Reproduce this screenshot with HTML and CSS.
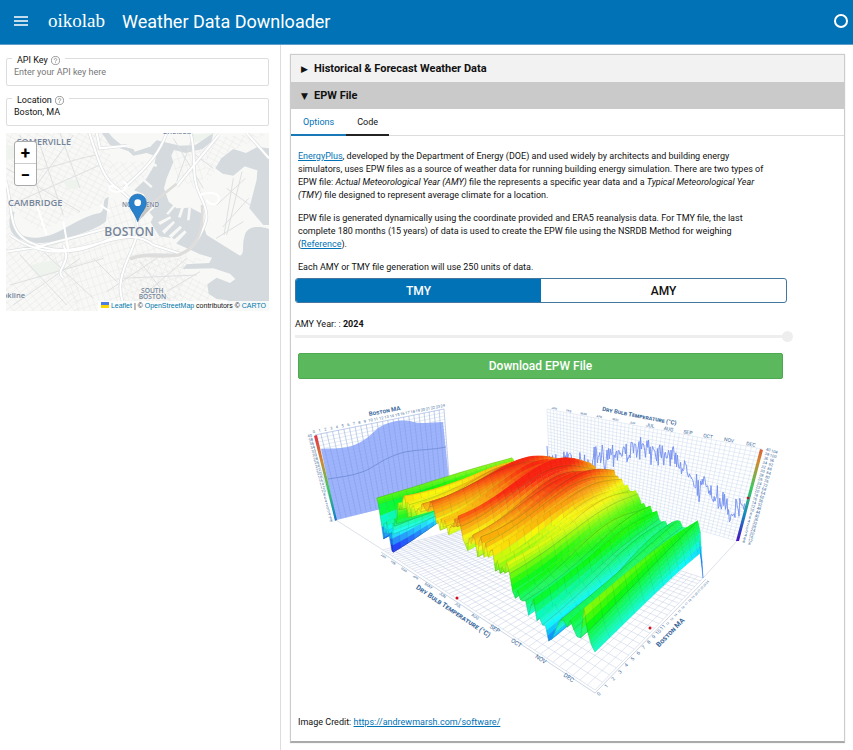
FILE: index.html
```html
<!DOCTYPE html>
<html lang="en">
<head>
<meta charset="utf-8">
<meta name="viewport" content="width=device-width, initial-scale=1">
<title>Weather Data Downloader</title>
<link rel="stylesheet" href="styles.css">
</head>
<body>
<header class="topbar">
  <button class="menu-btn" type="button" aria-label="Menu"><svg viewBox="0 0 14 10" width="14" height="10"><path d="M0 1h14M0 5h14M0 9h14"/></svg></button>
  <a class="brand" href="#">oikolab</a>
  <h1 class="title">Weather Data Downloader</h1>
  <svg class="busy" viewBox="0 0 16 16" width="16" height="16"><circle cx="8" cy="8" r="6"/></svg>
</header>
<div class="layout">
  <aside class="sidebar">
    <div class="field">
      <label class="field-label" for="key">API Key <svg class="help" viewBox="0 0 10 10" width="9" height="9"><circle cx="5" cy="5" r="4.5"/><path d="M3.6 4.1c0-2 2.9-1.8 2.8 0C6.4 5 5 5 5 6.2M5 7v.9"/></svg></label>
      <input class="field-input" id="key" type="text" placeholder="Enter your API key here">
    </div>
    <div class="field">
      <label class="field-label" for="loc">Location <svg class="help" viewBox="0 0 10 10" width="9" height="9"><circle cx="5" cy="5" r="4.5"/><path d="M3.6 4.1c0-2 2.9-1.8 2.8 0C6.4 5 5 5 5 6.2M5 7v.9"/></svg></label>
      <input class="field-input" id="loc" type="text" value="Boston, MA">
    </div>
    <div class="map">
      <svg class="map-canvas" viewBox="18 24 789 534" preserveAspectRatio="xMidYMid slice">
        <defs>
          <pattern id="g1" width="22" height="15" patternUnits="userSpaceOnUse" patternTransform="rotate(28)"><path class="st" d="M0 0H22M0 0V15"/></pattern>
          <pattern id="g2" width="17" height="26" patternUnits="userSpaceOnUse" patternTransform="rotate(-18)"><path class="st" d="M0 0H17M0 0V26"/></pattern>
          <pattern id="g3" width="24" height="16" patternUnits="userSpaceOnUse" patternTransform="rotate(-38)"><path class="st" d="M0 0H24M0 0V16"/></pattern>
        </defs>
        <rect class="land" x="0" y="0" width="850" height="600"/>
        <path fill="url(#g1)" d="M18 24H320L345 190 300 240 200 280 120 320 50 260 18 200Z"/>
        <path fill="url(#g3)" d="M18 200L50 330 110 365 230 345 240 558H18ZM330 110L460 110 420 180 350 190Z"/>
        <path fill="url(#g2)" d="M110 365L320 290 330 220 440 240 450 300 560 390 540 558H230ZM520 60L630 70 600 200 520 150Z"/>
        <path fill="url(#g1)" d="M350 400L620 400 540 440 640 490 620 558H350ZM620 40L807 24 690 80 620 170Z"/>
        <path class="park" d="M190 170l40-8 16 24-42 8zM90 420l70-14 26 30-70 22zM20 60l28 4 4 34-34 6zM570 30l60-6 8 16-60 14z"/>
        <g class="water">
          <path d="M326 216C300 222 322 252 300 264C270 268 228 290 180 318C132 342 90 344 60 328C38 310 38 284 44 262L34 258C20 300 32 336 70 346C110 362 160 352 214 336C260 320 302 306 318 288Z"/>
          <path d="M306 24L330 60 385 78 400 92 440 84 468 94 462 122 440 160 402 196 432 208 438 232 470 232 462 250 448 262 460 276 452 292 478 334 520 340 530 356 566 372 600 388 636 398 628 414 560 418 548 432 640 430 690 446 706 462 690 474 650 458 622 478 626 506 650 522 684 526 672 558H807V312C770 300 740 306 734 332C724 360 736 386 720 392L620 330 612 308 606 266 572 248 530 250 506 230 492 190 500 160 520 112 514 92 522 74 556 84 608 72 634 50 640 24 610 44 586 60 540 62 470 46 452 64 410 74 372 66 340 40 326 24Z"/>
          <path d="M807 70L772 66 738 84 700 72 664 100 646 130 668 146 700 152 734 124 772 136 770 164 748 250 790 300 807 300Z"/>
        </g>
        <path class="land" d="M398 200l22 28-8 8-22-28zM420 150l38 34-5 5-38-34zM452 108l20 12-4 6-22-10zM474 292l36-18 4 6-34 20zM486 318l34-30 5 5-32 34zM506 332l34-30 6 6-32 32zM520 346l34-30 6 6-32 34zM520 240l-22 26 7 3 24-28zM544 246l-10 30 8 2 10-30zM565 248l-4 38 8 0 4-36zM400 70l52-14 2 8-50 16z"/>
        <g class="minor"><path d="M60 130C120 150 180 110 290 90M20 130L240 260M120 60L190 270M180 24L240 190M30 240L300 120M220 30L110 180M60 30L130 240M560 70L640 130M520 40L610 190M580 30L530 170M680 190L750 240M650 240L736 160M700 160L672 330M668 306L746 220M648 340L730 290M726 140L680 330M280 400L350 470M60 390L200 540M130 380L280 520M30 480L310 400M40 540L240 400M320 500L470 400M420 410L520 540M360 460L590 450M420 520L560 400M600 440L500 500"/></g>
        <g class="casing"><path d="M268 24C300 120 310 160 352 190S400 230 410 280S400 360 380 410S350 500 380 558M500 24C480 80 450 120 370 190M18 170C40 250 20 320 90 352S210 380 300 354S420 330 460 360L540 386M30 330C100 380 160 386 230 376S340 320 400 336M656 30L530 184M572 24C592 100 570 150 600 210S622 290 600 330S560 380 540 388S430 380 390 402M18 380L110 366 210 340 320 310M290 24L300 70 380 62M740 24L807 100M190 360C220 420 160 430 190 460"/></g>
        <g class="major"><path d="M268 24C300 120 310 160 352 190S400 230 410 280S400 360 380 410S350 500 380 558M500 24C480 80 450 120 370 190M18 170C40 250 20 320 90 352S210 380 300 354S420 330 460 360L540 386M30 330C100 380 160 386 230 376S340 320 400 336M656 30L530 184M572 24C592 100 570 150 600 210S622 290 600 330S560 380 540 388M18 380L110 366 210 340 320 310M290 24L300 70 380 62M740 24L807 100M190 360C220 420 160 430 190 460M190 290L206 380M110 240L140 330M300 240L330 260M350 190c-30-20-30 10 0 10s40-20 20-30M600 210c30-12 60-6 56 14s-30 16-36 0"/></g>
        <path class="tunnel" d="M450 240L530 176M606 240C612 320 590 370 540 388S430 380 390 402"/>
        <path class="pin-shadow" d="M414 290L462 240 446 228Z"/>
        <g class="places">
          <text x="50" y="59" font-size="27">SOMERVILLE</text>
          <text x="24" y="244" font-size="28">CAMBRIDGE</text>
          <text x="313" y="334" font-size="36">BOSTON</text>
          <text x="487" y="28" font-size="23">Chelsea</text>
          <text x="-6" y="518" font-size="23">ookline</text>
          <text x="366" y="246" font-size="19">NORTH END</text>
          <text x="423" y="503" font-size="20">SOUTH</text>
          <text x="416" y="522" font-size="20">BOSTON</text>
        </g>
        <path class="pin" d="M413 290C404 262 387 252 387 233A26 26 0 0 1 439 233C439 252 422 262 413 290Z"/>
        <circle cx="413" cy="233" r="10" fill="#fff"/>
      </svg>
      <div class="zoom"><button type="button" aria-label="Zoom in">+</button><button type="button" aria-label="Zoom out">−</button></div>
      <div class="credit"><svg viewBox="0 0 8 6" width="8" height="6"><path fill="#4c7be1" d="M0 0h8v3H0z"/><path fill="#ffd500" d="M0 3h8v3H0z"/></svg> <a href="#">Leaflet</a> | © <a href="#">OpenStreetMap</a> contributors © <a href="#">CARTO</a></div>
    </div>
  </aside>
  <main class="main">
    <section class="card">
      <button class="acc" type="button" aria-expanded="false"><span class="tri">▶</span>Historical &amp; Forecast Weather Data</button>
      <button class="acc acc-open" type="button" aria-expanded="true"><span class="tri">▼</span>EPW File</button>
      <nav class="tabs"><button class="tab tab-on" type="button">Options</button><button class="tab" type="button">Code</button></nav>
      <div class="body">
        <div class="copy">
          <p><a href="#">EnergyPlus</a>, developed by the Department of Energy (DOE) and used widely by architects and building energy simulators, uses EPW files as a source of weather data for running building energy simulation. There are two types of EPW file: <i>Actual Meteorological Year (AMY)</i> file the represents a specific year data and a <i>Typical Meteorological Year (TMY)</i> file designed to represent average climate for a location.</p>
          <p>EPW file is generated dynamically using the coordinate provided and ERA5 reanalysis data. For TMY file, the last complete 180 months (15 years) of data is used to create the EPW file using the NSRDB Method for weighing (<a href="#">Reference</a>).</p>
          <p>Each AMY or TMY file generation will use 250 units of data.</p>
        </div>
        <div class="seg"><button class="seg-btn seg-on" type="button">TMY</button><button class="seg-btn" type="button">AMY</button></div>
        <div class="year">
          <label for="year">AMY Year: : <b>2024</b></label>
          <input id="year" class="slider" type="range" min="2010" max="2024" value="2024" disabled>
        </div>
        <button class="download" type="button">Download EPW File</button>
        <svg class="chart" id="chart" viewBox="298 392 485 312" role="img" aria-label="Dry bulb temperature, Boston MA"></svg>
        <p class="source">Image Credit: <a href="#">https://andrewmarsh.com/software/</a></p>
      </div>
    </section>
  </main>
</div>
<script src="chart.js"></script>
</body>
</html>
```
FILE: styles.css
```css
* { box-sizing: border-box; }
body { margin: 0; font-family: Roboto, "Liberation Sans", sans-serif; font-size: 9px; color: #111; background: #fff; }
button, input { font: inherit; color: inherit; }
button { border: 0; background: none; padding: 0; cursor: pointer; }
a { color: #0072b5; }
.topbar { display: flex; align-items: center; height: 45px; padding: 0 4px 2px 14px; background: #0072b5; border-bottom: 1px solid #5c9fcb; color: #fff; }
.menu-btn { display: flex; width: 14px; }
.menu-btn path { stroke: #fff; stroke-width: 1.4; }
.brand { margin-left: 20px; width: 74px; color: #fff; text-decoration: none; font-family: "Liberation Serif", serif; font-size: 19px; }
.title { flex: 1; margin: 0; font-size: 18px; font-weight: 400; }
.busy circle { fill: none; stroke: #fff; stroke-width: 2; }
.layout { display: flex; align-items: stretch; min-height: calc(100vh - 45px); }
.sidebar { flex: 0 0 281px; padding: 13px 11px 0 6px; border-right: 1px solid #ddd; }
.field { position: relative; height: 28px; margin-bottom: 12px; border: 1px solid #ddd; border-radius: 2px; }
.field-label { position: absolute; top: -5px; left: 5px; padding: 0 5px; display: flex; align-items: center; gap: 3px; background: #fff; line-height: 12px; }
.help { fill: none; stroke: #777; stroke-width: 0.8; }
.field-input { display: block; width: 100%; height: 26px; padding: 0 7px; border: 0; background: none; outline: 0; }
.field-input::placeholder { color: #777; }
.map { position: relative; height: 178px; margin-top: -5px; overflow: hidden; }
.map-canvas { display: block; width: 100%; height: 100%; }
.land { fill: #f8f8f6; }
.park { fill: #eff3ee; }
.water { fill: #d4dadd; }
.st { stroke: #e2e4e4; stroke-width: 2; fill: none; }
.minor { stroke: #dee1e1; stroke-width: 3; fill: none; }
.casing { stroke: #dcdfe0; stroke-width: 10; fill: none; }
.major { stroke: #fff; stroke-width: 6; fill: none; }
.tunnel { stroke: #dedddb; stroke-width: 8; fill: none; }
.places { fill: #75849a; stroke: #f8f8f6; stroke-width: 2; paint-order: stroke; font-family: "Open Sans", sans-serif; font-weight: 600; }
.pin { fill: #2a81cb; stroke: #1f6aa9; stroke-width: 2; }
.pin-shadow { fill: #000; opacity: 0.2; }
.zoom { position: absolute; top: 8px; left: 8px; display: grid; width: 23px; border: 1px solid #aaa; border-radius: 3px; background: #fff; overflow: hidden; }
.zoom button { height: 21px; font-size: 17px; line-height: 20px; font-weight: 700; color: #000; }
.zoom button + button { border-top: 1px solid #ccc; height: 22px; }
.credit { position: absolute; right: 0; bottom: 0; padding: 0 3px; background: rgba(255, 255, 255, 0.8); font: 7px/10px "Liberation Sans", sans-serif; white-space: nowrap; }
.credit a { color: #0078a8; text-decoration: none; }
.main { flex: 1; min-width: 0; padding: 9px 8px 7px 9px; }
.card { border: 1px solid #ccc; border-bottom: 2px solid #aaa; box-shadow: 0 0 1px #ccc; }
.acc { display: flex; align-items: center; width: 100%; height: 27px; padding-left: 10px; background: #f2f2f2; font-size: 11px; font-weight: 700; }
.acc-open { background: #cacaca; }
.tri { width: 13px; font: 9px "DejaVu Sans", sans-serif; text-align: left; }
.tabs { display: flex; height: 27px; border-bottom: 1px solid #ddd; }
.tab { height: 27px; padding: 0 11px; border-bottom: 2px solid #222; }
.tab-on { padding: 0 12px; color: #0072b5; border-color: #1878b8; }
.body { padding: 14px 57px 12px 4px; }
.copy { padding: 0 16px 0 3px; line-height: 13px; }
.copy p { margin: 0 0 10px; }
.copy p:last-child { margin-bottom: 4px; }
.seg { display: flex; height: 25px; border: 1px solid #44779f; border-radius: 3px; overflow: hidden; }
.seg-btn { flex: 1; font-size: 12px; line-height: 22px; font-weight: 500; }
.seg-on { background: #0072b5; color: #fff; }
.year { margin-top: 15px; line-height: 12px; }
.slider { display: block; appearance: none; width: calc(100% + 6px); height: 11px; margin: 1px 0 0; background: linear-gradient(#eee, #eee) left center / calc(100% - 8px) 3px no-repeat; }
.slider::-webkit-slider-thumb { appearance: none; width: 11px; height: 11px; border-radius: 50%; background: #eee; }
.download { display: block; width: calc(100% - 7px); height: 26px; margin: 11px 0 0 3px; border: 1px solid #4eaa50; border-radius: 2px; background: #5cb85c; color: #fff; font-size: 12px; font-weight: 500; }
.chart { display: block; width: calc(100% - 7px); margin: 13px 0 0 3px; }
.source { margin: 12px 3px 0; line-height: 13px; }
```
FILE: chart.js
```js
(function () {
  var svg = document.getElementById('chart');
  var out = [];
  var seed = 7;
  function rnd() { seed = (seed * 16807) % 2147483647; return seed / 2147483647; }
  function f(n) { return n.toFixed(1); }
  function poly(pts) { return pts.map(function (p) { return f(p[0]) + ',' + f(p[1]); }).join(' '); }

  // Projective map from the unit square to a quad: (0,0) (1,0) (1,1) (0,1).
  function quad(a, b, c, d) {
    var dx1 = b[0] - c[0], dx2 = d[0] - c[0], sx = a[0] - b[0] + c[0] - d[0];
    var dy1 = b[1] - c[1], dy2 = d[1] - c[1], sy = a[1] - b[1] + c[1] - d[1];
    var den = dx1 * dy2 - dx2 * dy1;
    var g = (sx * dy2 - dx2 * sy) / den, h = (dx1 * sy - sx * dy1) / den;
    return function (u, v) {
      var w = g * u + h * v + 1;
      return [((b[0] - a[0] + g * b[0]) * u + (d[0] - a[0] + h * d[0]) * v + a[0]) / w,
              ((b[1] - a[1] + g * b[1]) * u + (d[1] - a[1] + h * d[1]) * v + a[1]) / w];
    };
  }
  function lines(map, nu, nv, color, width) {
    var d = '', i, p, q;
    for (i = 0; i <= nu; i++) { p = map(i / nu, 0); q = map(i / nu, 1); d += 'M' + f(p[0]) + ' ' + f(p[1]) + 'L' + f(q[0]) + ' ' + f(q[1]); }
    for (i = 0; i <= nv; i++) { p = map(0, i / nv); q = map(1, i / nv); d += 'M' + f(p[0]) + ' ' + f(p[1]) + 'L' + f(q[0]) + ' ' + f(q[1]); }
    out.push('<path d="' + d + '" fill="none" stroke="' + color + '" stroke-width="' + width + '"/>');
  }
  function label(s, x, y, angle, size, bold) {
    out.push('<text transform="translate(' + f(x) + ' ' + f(y) + ') rotate(' + angle + ')" font-size="' + size + '" text-anchor="middle" fill="#3d6a9c"' + (bold ? ' font-weight="700" font-variant="small-caps"' : '') + '>' + s + '</text>');
  }
  function curve(table, t) {
    for (var i = 1; i < table.length; i++) {
      if (t <= table[i][0]) {
        var a = table[i - 1], b = table[i];
        return a[1] + (b[1] - a[1]) * (t - a[0]) / (b[0] - a[0]);
      }
    }
    return table[table.length - 1][1];
  }

  var floor = quad([383, 550], [595, 690], [703, 578], [512, 515]);
  var left = quad([315, 435], [444, 409], [450, 490], [336, 520]);
  var right = quad([547, 409], [762, 449], [737, 541], [550, 487]);
  var months = ['JAN', 'FEB', 'MAR', 'APR', 'MAY', 'JUN', 'JUL', 'AUG', 'SEP', 'OCT', 'NOV', 'DEC'];
  var i, j, k, p;

  out.push('<defs><linearGradient id="temp" x1="0" y1="0" x2="0" y2="1"><stop offset="0" stop-color="#e0344c"/><stop offset=".25" stop-color="#d08a30"/><stop offset=".5" stop-color="#3fc860"/><stop offset=".75" stop-color="#1689c0"/><stop offset="1" stop-color="#4a10c0"/></linearGradient></defs>');
  out.push('<path d="M336 520L383 550M737 541L703 578M311 437L336 520" stroke="#c5ccd8" stroke-width=".6" fill="none"/>');

  // Walls
  lines(left, 24, 26, '#b9cce2', 0.4);
  out.push('<path d="M321 449C330 448 339 449 348 447C358 445 368 438 378 428C392 420 402 420 410 421C422 425 432 422 443 422L450 490L377 510L336 520Z" fill="#8fa9fb" fill-opacity=".88"/>');
  out.push('<path d="M328 479C340 477 352 476 362 472C374 468 382 458 405 452C420 449 434 450 446 447" fill="none" stroke="#6683cf" stroke-width=".7"/>');
  lines(left, 24, 0.5, '#7690d4', 0.3);
  lines(right, 52, 26, '#c3d4ea', 0.4);
  var trend = [[547, 463], [551, 456], [560, 465], [568, 453], [577, 465], [588, 468], [600, 460], [612, 450], [622, 452], [636, 449], [655, 449], [672, 453], [682, 467], [692, 472], [697, 488], [708, 482], [714, 504], [723, 500], [730, 512], [740, 503], [746, 508]];
  for (var x = 547, s = ''; x < 745; x += 0.8) {
    s += f(x) + ',' + f(curve(trend, x) + (rnd() - 0.5) * (rnd() > 0.8 ? 34 : 17)) + ' ';
  }
  out.push('<polyline points="' + s + '" fill="none" stroke="#738ff0" stroke-width=".9"/>');
  out.push('<path d="M314 436L317 435L337 520L335 521Z M760 449L763 450L739 541L736 541Z" fill="url(#temp)"/>');

  // Floor
  out.push('<polygon points="' + poly([floor(0, 0), floor(1, 0), floor(1, 1), floor(0, 1)]) + '" fill="#fff"/>');
  lines(floor, 52, 24, '#c3cde2', 0.5);
  out.push('<path d="M381 552L595 693L706 579" fill="none" stroke="#a9b9cf" stroke-width=".6"/>');

  // Surface: height by day and hour
  var base0 = [[0, 52], [0.008, 50], [0.02, 6], [0.04, 28], [0.07, 26], [0.085, 8], [0.1, 30], [0.13, 50], [0.2, 54], [0.3, 62], [0.42, 72], [0.55, 76], [0.66, 66], [0.74, 54], [0.82, 38], [0.9, 26], [0.93, 50], [0.965, 58], [0.972, 76], [0.985, 46], [1, 38]];
  var base1 = [[0, 57], [0.02, 54], [0.06, 47], [0.12, 47], [0.2, 51], [0.3, 57], [0.42, 64], [0.55, 70], [0.65, 68], [0.75, 56], [0.86, 42], [0.94, 44], [0.985, 56], [1, 27]];
  var days = 110, sub = 3, hours = 24, rows = [];
  var drift = 0;
  for (i = 0; i <= days; i++) {
    var u = i / days;
    drift = drift * 0.35 + (rnd() - 0.5) * 24;
    var amp = u < 0.02 || u > 0.965 ? 0 : 1;
    var tilt = (rnd() - 0.5) * 8 * amp, row = [];
    for (j = 0; j <= hours; j++) {
      var v = j / hours, m = Math.pow(Math.sin(Math.PI * Math.min(1, v * 0.85)), 2);
      var summer = Math.pow(Math.sin(Math.PI * Math.min(1, u * 1.02)), 2);
      var z = curve(base0, u) * (1 - v) + curve(base1, u) * v + m * (1 + 19 * summer * amp) + drift * amp * (1 - 0.7 * v) + tilt * Math.cos(v * 5 + i * 0.7);
      row.push(Math.max(0, z));
    }
    rows.push(row);
  }
  rows[days][24] = 0;
  var hues = [[0, 272], [8, 236], [20, 200], [32, 160], [42, 130], [52, 102], [62, 72], [71, 48], [80, 32], [90, 6], [120, 0]];
  function at(u, v, z) {
    var q = floor(u, v);
    return [q[0] - z * 0.12 * (1 - u) * (1 - v), q[1] - z];
  }
  for (i = 0; i < days; i++) {
    for (k = 0; k < sub; k++) {
      for (j = hours - 1; j >= 0; j--) {
        var t0 = k / sub, t1 = (k + 1) / sub;
        var z00 = rows[i][j] * (1 - t0) + rows[i + 1][j] * t0, z10 = rows[i][j] * (1 - t1) + rows[i + 1][j] * t1;
        var z01 = rows[i][j + 1] * (1 - t0) + rows[i + 1][j + 1] * t0, z11 = rows[i][j + 1] * (1 - t1) + rows[i + 1][j + 1] * t1;
        var u0 = (i + t0) / days, u1 = (i + t1) / days, v0 = j / hours, v1 = (j + 1) / hours;
        var level = (z00 + z10 + z01 + z11) / 4 * (1 - 0.22 * Math.max(0, u0 - 0.6) / 0.4);
        var c = 'hsl(' + Math.round(curve(hues, level)) + ',';
        var slope = Math.max(-3, Math.min(3, (z10 - z00) * 0.5));
        var pts = [at(u0, v0, z00), at(u1, v0, z10), at(u1, v1, z11), at(u0, v1, z01)];
        out.push('<polygon points="' + poly(pts) + '" fill="' + c + '96%,' + f(54 + slope) + '%)" stroke="' + c + '88%,' + f(51 + slope) + '%)" stroke-width=".4"/>');
        if (j % 2 === 0) {
          out.push('<path d="M' + f(pts[0][0]) + ' ' + f(pts[0][1]) + 'L' + f(pts[1][0]) + ' ' + f(pts[1][1]) + '" stroke="#2f5a20" stroke-opacity=".4" stroke-width=".4"/>');
        }
        if (k === 0 && i % 2 === 0) {
          out.push('<path d="M' + f(pts[0][0]) + ' ' + f(pts[0][1]) + 'L' + f(pts[3][0]) + ' ' + f(pts[3][1]) + '" stroke="#2f5a20" stroke-opacity=".5" stroke-width=".4"/>');
        }
      }
    }
  }

  // Axis labels
  label('Boston MA', 385, 413, -11, 6, true);
  label('Dry Bulb Temperature (°C)', 639, 418, 11, 6, true);
  label('Dry Bulb Temperature (°C)', 452, 613, 34, 7, true);
  label('Boston MA', 672, 634, -46, 7, true);
  for (i = 0; i < 12; i++) {
    p = floor((i + 0.2) / 12, 0);
    label(months[i], p[0] - 2, p[1] + 6, 34, i < 4 ? 3 : i < 8 ? 4 : 6);
    p = right((i + 0.5) / 12, 0);
    label(months[i], p[0], p[1] - 1, 11, i < 6 ? 3 : 5);
  }
  for (i = 0; i <= 24; i++) {
    p = floor(1, i / 24);
    label(i, p[0] + 5, p[1] + 5, -46, i < 12 ? 5 : 3);
    p = left(i / 24, 0);
    label(i, p[0] - 1, p[1] - 2, -11, 4);
    p = left(0, i / 24);
    label(40 - i * 2, p[0] - 5, p[1] + 2, -11, 4);
    p = right(1, i / 24);
    label(40 - i * 2, p[0] + 6, p[1] + 2, 14, 4);
    label(104 - i * 4, p[0] + 12, p[1] + 4, 14, 4);
  }
  out.push('<g fill="#d01020"><circle cx="457" cy="598" r="1.5"/><circle cx="650" cy="628" r="1.5"/><circle cx="748" cy="498" r="1.3"/></g>');
  svg.innerHTML = out.join('');
}());
```
